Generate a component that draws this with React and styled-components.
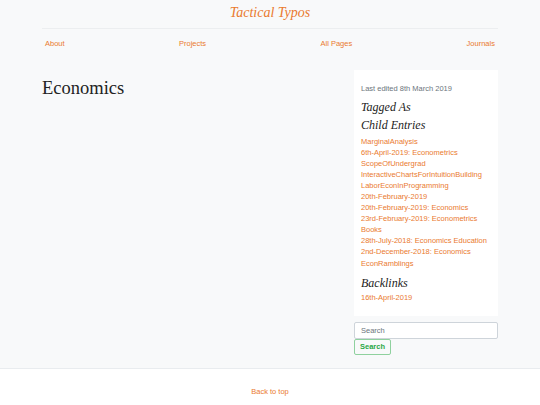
import React from "react";
import styled, { createGlobalStyle } from "styled-components";

const GlobalStyle = createGlobalStyle`
  html, body {
    margin: 0;
    padding: 0;
    background: #ffffff;
  }
  body {
    font-family: "Liberation Sans", Arial, sans-serif;
    color: #333;
  }
`;

const ORANGE = "#ea7a2f";
const SERIF = `"Liberation Serif", Georgia, serif`;

const childEntries = [
  "MarginalAnalysis",
  "6th-April-2019: Econometrics",
  "ScopeOfUndergrad",
  "InteractiveChartsForIntuitionBuilding",
  "LaborEconInProgramming",
  "20th-February-2019",
  "20th-February-2019: Economics",
  "23rd-February-2019: Econometrics",
  "Books",
  "28th-July-2018: Economics Education",
  "2nd-December-2018: Economics",
  "EconRamblings",
];

const navItems = ["About", "Projects", "All Pages", "Journals"];

export default function App() {
  return (
    <>
      <GlobalStyle />
      <Page>
        <Container>
          <Header>
            <SiteTitle href="#">Tactical Typos</SiteTitle>
          </Header>
          <Nav>
            {navItems.map((item) => (
              <NavLink key={item} href="#">
                {item}
              </NavLink>
            ))}
          </Nav>
          <Main>
            <Content>
              <PageTitle>Economics</PageTitle>
            </Content>
            <Aside>
              <SideBox>
                <Edited>Last edited 8th March 2019</Edited>
                <SideHeading>Tagged As</SideHeading>
                <SideHeading>Child Entries</SideHeading>
                <LinkList>
                  {childEntries.map((entry) => (
                    <li key={entry}>
                      <SideLink href="#">{entry}</SideLink>
                    </li>
                  ))}
                </LinkList>
                <SideHeading $last>Backlinks</SideHeading>
                <LinkList>
                  <li>
                    <SideLink href="#">16th-April-2019</SideLink>
                  </li>
                </LinkList>
              </SideBox>
              <SearchForm onSubmit={(e) => e.preventDefault()}>
                <SearchInput placeholder="Search" aria-label="Search" />
                <SearchButton type="submit">Search</SearchButton>
              </SearchForm>
            </Aside>
          </Main>
        </Container>
      </Page>
      <Footer>
        <SiteLink href="#">Back to top</SiteLink>
      </Footer>
    </>
  );
}

const Page = styled.div`
  background: #f8f9fa;
  border-bottom: 1px solid #e9ecef;
  padding-bottom: 13px;
`;

const Container = styled.div`
  width: 456px;
  margin: 0 auto;
`;

const Header = styled.header`
  display: flex;
  justify-content: center;
  padding: 5px 0 7px;
  border-bottom: 1px solid #eceef0;
`;

const SiteTitle = styled.a`
  font-family: ${SERIF};
  font-style: italic;
  font-size: 14px;
  line-height: 16px;
  color: ${ORANGE};
  text-decoration: none;
`;

const Nav = styled.nav`
  display: flex;
  justify-content: space-between;
  padding: 9px 3px 0;
`;

const NavLink = styled.a`
  font-size: 7.5px;
  line-height: 12px;
  color: ${ORANGE};
  text-decoration: none;
`;

const Main = styled.div`
  display: flex;
  justify-content: space-between;
  align-items: flex-start;
  margin-top: 20px;
`;

const Content = styled.div`
  flex: 1;
`;

const PageTitle = styled.h1`
  font-family: ${SERIF};
  font-weight: normal;
  font-size: 18.5px;
  line-height: 22px;
  color: #222;
  margin: 7px 0 0;
`;

const Aside = styled.aside`
  width: 144px;
  display: flex;
  flex-direction: column;
`;

const SideBox = styled.div`
  background: #ffffff;
  padding: 13px 7px 13px;
`;

const Edited = styled.p`
  margin: 0 0 4px;
  font-size: 7.5px;
  line-height: 12px;
  color: #6c757d;
`;

const SideHeading = styled.h4`
  margin: ${(p) => (p.$last ? "6px 0 0" : "0 0 2px")};
  font-family: ${SERIF};
  font-style: italic;
  font-weight: normal;
  font-size: 12px;
  line-height: 17px;
  color: #222;

  & + & {
    margin-top: -1px;
  }
`;

const LinkList = styled.ul`
  list-style: none;
  margin: 0;
  padding: 0;
  li {
    font-size: 7.5px;
    line-height: 11.05px;
  }
`;

const SideLink = styled.a`
  color: ${ORANGE};
  text-decoration: none;
`;

const SearchForm = styled.form`
  display: flex;
  flex-direction: column;
  align-items: flex-start;
  margin-top: 6px;
`;

const SearchInput = styled.input`
  box-sizing: border-box;
  width: 100%;
  height: 17px;
  padding: 0 6px;
  font-family: "Liberation Sans", Arial, sans-serif;
  font-size: 7.5px;
  color: #495057;
  background: #fff;
  border: 1px solid #ced4da;
  border-radius: 2px;
  outline: none;

  &::placeholder {
    color: #6c757d;
  }
`;

const SearchButton = styled.button`
  box-sizing: border-box;
  height: 16px;
  padding: 0 5px;
  font-family: "Liberation Sans", Arial, sans-serif;
  font-size: 7.5px;
  font-weight: bold;
  color: #28a745;
  background: transparent;
  border: 1px solid #8fd19e;
  border-radius: 2px;
  cursor: pointer;
`;

const Footer = styled.footer`
  background: #ffffff;
  text-align: center;
  font-size: 7.5px;
  line-height: 12px;
  padding: 17px 0 8px;
`;

const SiteLink = styled.a`
  color: ${ORANGE};
  text-decoration: none;
`;
